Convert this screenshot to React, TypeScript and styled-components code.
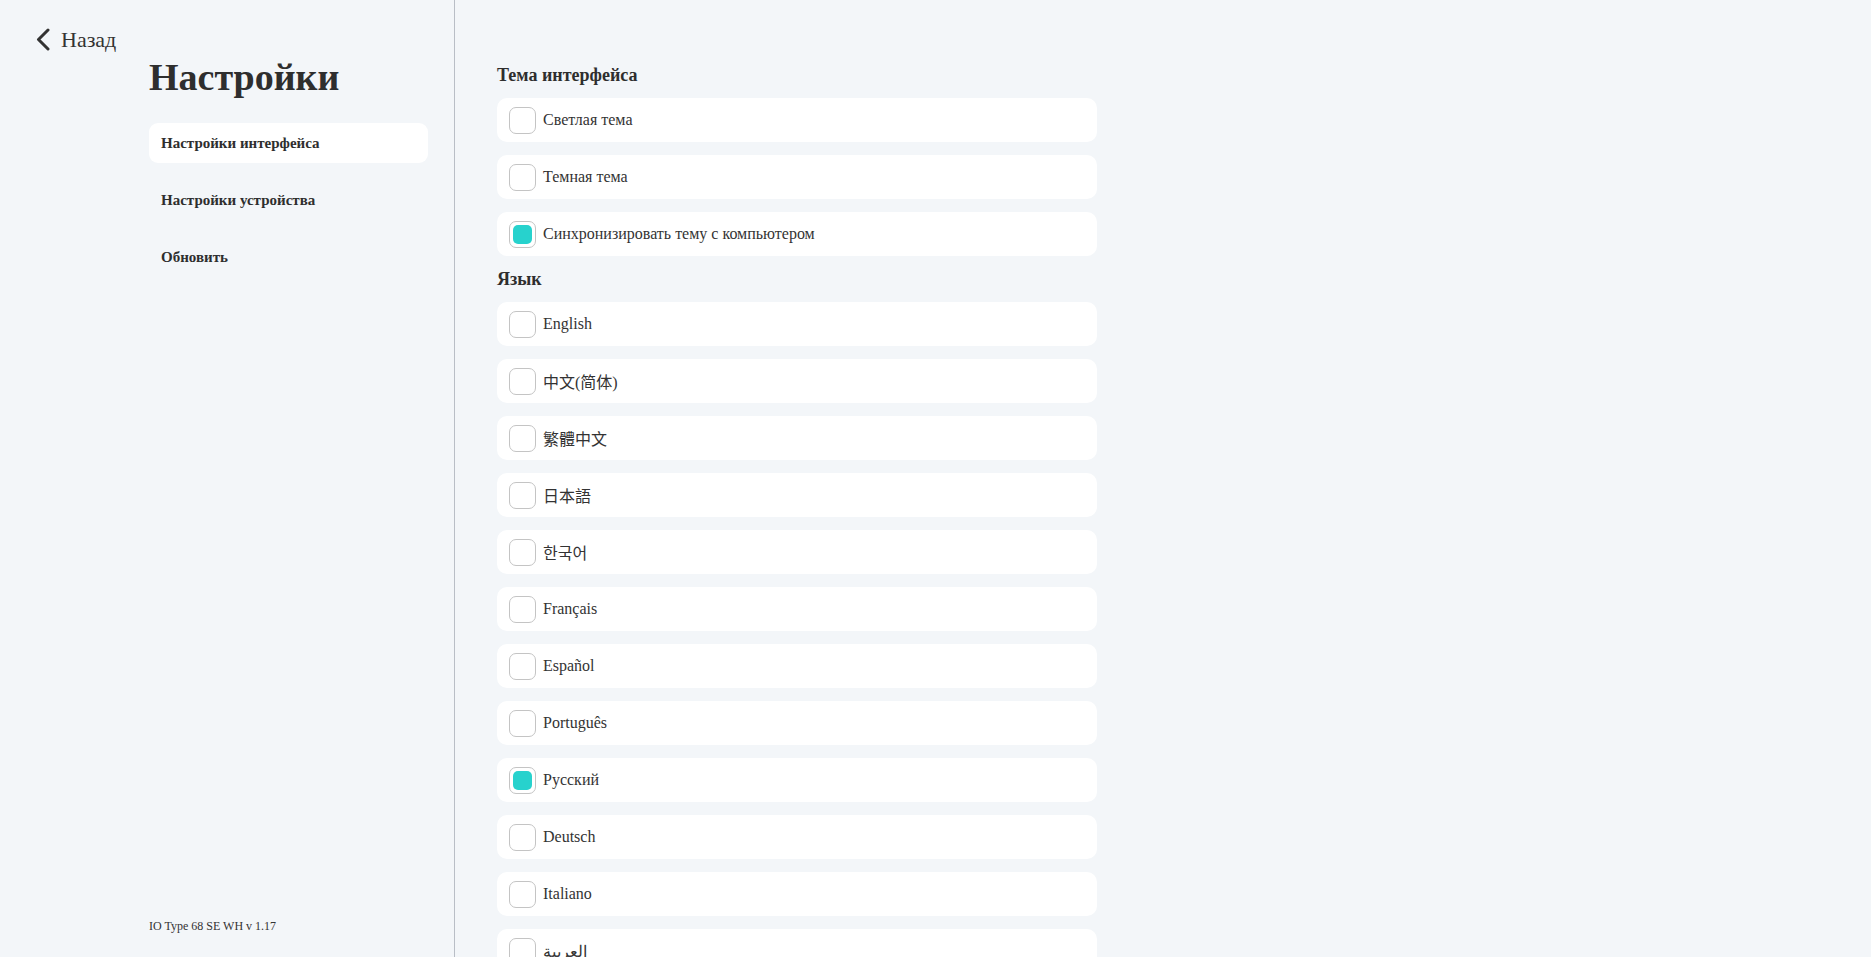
import React, { useState } from "react";
import styled, { createGlobalStyle } from "styled-components";

const GlobalStyle = createGlobalStyle`
  html, body {
    margin: 0;
    padding: 0;
    height: 100%;
    overflow: hidden;
  }
  body {
    background: #f3f6f9;
    color: #333;
    font-family: "Liberation Serif", "Times New Roman", "Noto Sans CJK SC", serif;
  }
  * {
    box-sizing: border-box;
  }
`;

const Layout = styled.div`
  display: flex;
  height: 100vh;
`;

const Sidebar = styled.aside`
  width: 455px;
  flex-shrink: 0;
  display: flex;
  flex-direction: column;
  border-right: 1px solid #b9bec6;
  padding: 28px 26px 23px 36px;
`;

const BackLink = styled.a`
  display: flex;
  align-items: center;
  gap: 11px;
  height: 23px;
  font-size: 22px;
  line-height: 23px;
  color: #333;
  text-decoration: none;
  cursor: pointer;
`;

const SideColumn = styled.div`
  margin-left: 113px;
  display: flex;
  flex-direction: column;
  flex: 1;
`;

const Title = styled.h1`
  margin: 1px 0 21px;
  font-size: 38px;
  line-height: 50px;
  font-weight: 700;
  color: #2e2e2e;
`;

const NavList = styled.nav`
  display: flex;
  flex-direction: column;
  gap: 17px;
`;

const NavItem = styled.div<{ $active?: boolean }>`
  height: 40px;
  display: flex;
  align-items: center;
  padding: 1px 0 0 12px;
  border-radius: 9px;
  background: ${(p) => (p.$active ? "#ffffff" : "transparent")};
  font-size: 15px;
  font-weight: 700;
  color: #2e2e2e;
  cursor: pointer;
`;

const Spacer = styled.div`
  flex: 1;
`;

const Version = styled.div`
  font-size: 12px;
  line-height: 16px;
  color: #333;
`;

const Content = styled.main`
  flex: 1;
  overflow-y: auto;
  scrollbar-width: none;
  padding: 65px 0 40px 42px;
`;

const Column = styled.div`
  width: 600px;
  display: flex;
  flex-direction: column;
  gap: 13px;
`;

const SectionTitle = styled.h2`
  margin: 0;
  font-size: 18px;
  line-height: 20px;
  font-weight: 700;
  color: #2e2e2e;
`;

const OptionCard = styled.label`
  height: 44px;
  display: flex;
  align-items: center;
  gap: 7px;
  padding: 0 12px;
  background: #fff;
  border-radius: 10px;
  font-size: 16px;
  color: #333;
  cursor: pointer;
`;

const Box = styled.span<{ $checked: boolean }>`
  width: 27px;
  height: 27px;
  flex-shrink: 0;
  border: 1px solid #c4c4c4;
  border-radius: 7px;
  padding: 3px;
  display: flex;

  &::after {
    content: "";
    flex: 1;
    border-radius: 5px;
    background: ${(p) => (p.$checked ? "#27d2cd" : "transparent")};
  }
`;

const BackChevron = () => (
  <svg width="14" height="23" viewBox="0 0 14 23" fill="none">
    <polyline
      points="12,2 2.5,11.5 12,21"
      stroke="#333"
      strokeWidth="3"
      strokeLinecap="round"
      strokeLinejoin="round"
    />
  </svg>
);

const themes = ["Светлая тема", "Темная тема", "Синхронизировать тему с компьютером"];

const languages = [
  "English",
  "中文(简体)",
  "繁體中文",
  "日本語",
  "한국어",
  "Français",
  "Español",
  "Português",
  "Русский",
  "Deutsch",
  "Italiano",
  "العربية",
  "Türkçe",
  "Polski",
];

function Option({
  label,
  checked,
  onSelect,
}: {
  label: string;
  checked: boolean;
  onSelect: () => void;
}) {
  return (
    <OptionCard onClick={onSelect}>
      <Box $checked={checked} />
      <span>{label}</span>
    </OptionCard>
  );
}

export default function App() {
  const [theme, setTheme] = useState(2);
  const [lang, setLang] = useState(8);
  const [section, setSection] = useState(0);
  const nav = ["Настройки интерфейса", "Настройки устройства", "Обновить"];

  return (
    <>
      <GlobalStyle />
      <Layout>
        <Sidebar>
          <BackLink>
            <BackChevron />
            Назад
          </BackLink>
          <SideColumn>
            <Title>Настройки</Title>
            <NavList>
              {nav.map((item, i) => (
                <NavItem key={item} $active={section === i} onClick={() => setSection(i)}>
                  {item}
                </NavItem>
              ))}
            </NavList>
            <Spacer />
            <Version>IO Type 68 SE WH v 1.17</Version>
          </SideColumn>
        </Sidebar>
        <Content>
          <Column>
            <SectionTitle>Тема интерфейса</SectionTitle>
            {themes.map((t, i) => (
              <Option key={t} label={t} checked={theme === i} onSelect={() => setTheme(i)} />
            ))}
            <SectionTitle>Язык</SectionTitle>
            {languages.map((l, i) => (
              <Option key={l} label={l} checked={lang === i} onSelect={() => setLang(i)} />
            ))}
          </Column>
        </Content>
      </Layout>
    </>
  );
}
